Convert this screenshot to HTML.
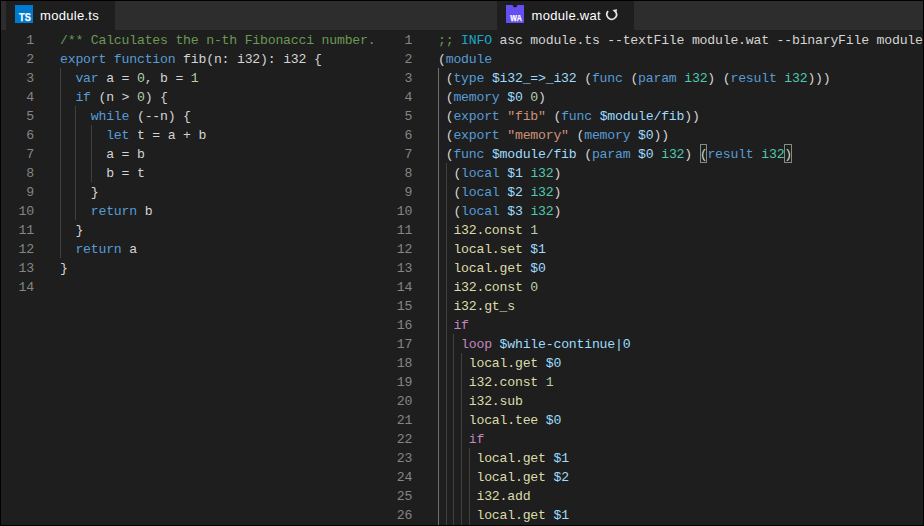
<!DOCTYPE html>
<html lang="en"><head><meta charset="utf-8"><title>module.ts - module.wat</title>
<style>
html,body{margin:0;padding:0;background:#000;}
body{width:924px;height:526px;overflow:hidden;position:relative;font-family:"Liberation Sans",sans-serif;}
#win{position:absolute;left:1px;top:1px;width:922px;height:524px;background:#1e1e1e;overflow:hidden;}
#tabs{position:absolute;left:0;top:0;width:922px;height:29px;background:#2d2d2d;}
#strip{display:none}
.tab{position:absolute;top:0;height:29px;letter-spacing:0.3px;background:#1e1e1e;color:#fff;font-size:13px;line-height:30px;white-space:nowrap;}
.tab .ic{position:absolute;top:4px;width:18px;height:18px;}
.tab .lb{position:absolute;top:0;}
.pane{position:absolute;top:30px;height:494px;overflow:hidden;}
.code{position:absolute;left:0;top:0;font-family:"Liberation Mono",monospace;font-size:13.2px;letter-spacing:-0.2200px;line-height:19px;color:#d4d4d4;white-space:pre;}
.ln{height:19px;position:relative;}
.no{position:absolute;left:0;top:0;text-align:right;color:#858585;}
.tx{position:absolute;top:0;}
.k{color:#569cd6}.c{color:#6a9955}.n{color:#b5cea8}.w{color:#d4d4d4}
.v{color:#9cdcfe}.t{color:#4ec9b0}.s{color:#ce9178}.f{color:#dcdcaa}.p{color:#c586c0}.i{color:#1aa7c9}
.g{position:absolute;width:1px;background:#404040;display:block}
.ga{background:#707070}
.bm{position:absolute;display:block;box-sizing:border-box;width:7.7px;height:19px;border:1px solid #888;background:rgba(0,100,0,0.1);}
#L .no{width:32.9px}#L .tx{left:59px}
#R .no{width:411.1px}#R .tx{left:437px}
</style></head><body>
<div id="win">
<div id="tabs"><div id="strip"></div>
<div class="tab" style="left:5px;width:109px"><svg class="ic" style="left:9px" viewBox="0 0 18 18"><rect width="18" height="18" fill="#007acc"/><text x="3.9" y="15.9" textLength="12.3" lengthAdjust="spacingAndGlyphs" font-family="Liberation Sans, sans-serif" font-weight="bold" font-size="11" fill="#fff" stroke="#fff" stroke-width="0.25">TS</text></svg><span class="lb" style="left:34px">module.ts</span></div>
<div class="tab" style="left:496px;width:137px"><svg class="ic" style="left:9px" viewBox="0 0 18 18"><path d="M0 0H6.6A2.4 2.4 0 0 0 11.4 0H18V18H0Z" fill="#654ff0"/><text x="4.2" y="15.6" textLength="11.9" lengthAdjust="spacingAndGlyphs" font-family="Liberation Sans, sans-serif" font-weight="bold" font-size="8.6" fill="#fff" stroke="#fff" stroke-width="0.25">WA</text></svg><span class="lb" style="left:34.5px">module.wat</span><svg style="position:absolute;left:104px;top:3px;width:20px;height:20px" viewBox="601 4 20 20"><path d="M608.13 11.19A4.8 4.8 0 1 0 615.94 12.15" fill="none" stroke="#e4e4e4" stroke-width="1.7"/><path d="M612.5 10.0L617.1 9.3L616.2 13.7Z" fill="#e4e4e4"/></svg></div>
</div>
<div class="pane" id="L" style="left:0;width:379px"><i class="g" style="left:59.00px;top:37px;height:190px"></i><i class="g" style="left:74.40px;top:75px;height:114px"></i><i class="g" style="left:89.80px;top:94px;height:57px"></i><div class="code"><div class="ln"><span class="no">1</span><span class="tx"><span class="c">/** Calculates the n-th Fibonacci number. */</span></span></div><div class="ln"><span class="no">2</span><span class="tx"><span class="k">export function</span><span class="w"> fib(n: i32): i32 {</span></span></div><div class="ln"><span class="no">3</span><span class="tx"><span class="w">  </span><span class="k">var</span><span class="w"> a = </span><span class="n">0</span><span class="w">, b = </span><span class="n">1</span></span></div><div class="ln"><span class="no">4</span><span class="tx"><span class="w">  </span><span class="k">if</span><span class="w"> (n &gt; </span><span class="n">0</span><span class="w">) {</span></span></div><div class="ln"><span class="no">5</span><span class="tx"><span class="w">    </span><span class="k">while</span><span class="w"> (--n) {</span></span></div><div class="ln"><span class="no">6</span><span class="tx"><span class="w">      </span><span class="k">let</span><span class="w"> t = a + b</span></span></div><div class="ln"><span class="no">7</span><span class="tx"><span class="w">      a = b</span></span></div><div class="ln"><span class="no">8</span><span class="tx"><span class="w">      b = t</span></span></div><div class="ln"><span class="no">9</span><span class="tx"><span class="w">    }</span></span></div><div class="ln"><span class="no">10</span><span class="tx"><span class="w">    </span><span class="k">return</span><span class="w"> b</span></span></div><div class="ln"><span class="no">11</span><span class="tx"><span class="w">  }</span></span></div><div class="ln"><span class="no">12</span><span class="tx"><span class="w">  </span><span class="k">return</span><span class="w"> a</span></span></div><div class="ln"><span class="no">13</span><span class="tx"><span class="w">}</span></span></div><div class="ln"><span class="no">14</span><span class="tx"></span></div></div></div>
<div class="pane" id="R" style="left:0;width:922px;clip-path:inset(0 0 0 379px)"><i class="g ga" style="left:437.00px;top:37px;height:475px"></i><i class="g" style="left:444.70px;top:132px;height:380px"></i><i class="g" style="left:452.40px;top:303px;height:209px"></i><i class="g" style="left:460.10px;top:322px;height:190px"></i><i class="g" style="left:467.80px;top:417px;height:95px"></i><i class="bm" style="left:699px;top:113px;width:7px"></i><i class="bm" style="left:783px;top:113px;width:8px"></i><div class="code"><div class="ln"><span class="no">1</span><span class="tx"><span class="c">;;</span><span class="w"> </span><span class="i">INFO</span><span class="w"> asc module.ts --textFile module.wat --binaryFile module.wasm</span></span></div><div class="ln"><span class="no">2</span><span class="tx"><span class="w">(</span><span class="k">module</span></span></div><div class="ln"><span class="no">3</span><span class="tx"><span class="w"> (</span><span class="k">type</span><span class="w"> </span><span class="v">$i32_=&gt;_i32</span><span class="w"> (</span><span class="k">func</span><span class="w"> (</span><span class="k">param</span><span class="w"> </span><span class="t">i32</span><span class="w">) (</span><span class="k">result</span><span class="w"> </span><span class="t">i32</span><span class="w">)))</span></span></div><div class="ln"><span class="no">4</span><span class="tx"><span class="w"> (</span><span class="k">memory</span><span class="w"> </span><span class="v">$0</span><span class="w"> </span><span class="n">0</span><span class="w">)</span></span></div><div class="ln"><span class="no">5</span><span class="tx"><span class="w"> (</span><span class="k">export</span><span class="w"> </span><span class="s">"fib"</span><span class="w"> (</span><span class="k">func</span><span class="w"> </span><span class="v">$module/fib</span><span class="w">))</span></span></div><div class="ln"><span class="no">6</span><span class="tx"><span class="w"> (</span><span class="k">export</span><span class="w"> </span><span class="s">"memory"</span><span class="w"> (</span><span class="k">memory</span><span class="w"> </span><span class="v">$0</span><span class="w">))</span></span></div><div class="ln"><span class="no">7</span><span class="tx"><span class="w"> (</span><span class="k">func</span><span class="w"> </span><span class="v">$module/fib</span><span class="w"> (</span><span class="k">param</span><span class="w"> </span><span class="v">$0</span><span class="w"> </span><span class="t">i32</span><span class="w">) </span><span class="w">(</span><span class="k">result</span><span class="w"> </span><span class="t">i32</span><span class="w">)</span></span></div><div class="ln"><span class="no">8</span><span class="tx"><span class="w">  (</span><span class="k">local</span><span class="w"> </span><span class="v">$1</span><span class="w"> </span><span class="t">i32</span><span class="w">)</span></span></div><div class="ln"><span class="no">9</span><span class="tx"><span class="w">  (</span><span class="k">local</span><span class="w"> </span><span class="v">$2</span><span class="w"> </span><span class="t">i32</span><span class="w">)</span></span></div><div class="ln"><span class="no">10</span><span class="tx"><span class="w">  (</span><span class="k">local</span><span class="w"> </span><span class="v">$3</span><span class="w"> </span><span class="t">i32</span><span class="w">)</span></span></div><div class="ln"><span class="no">11</span><span class="tx"><span class="w">  </span><span class="f">i32.const</span><span class="w"> </span><span class="n">1</span></span></div><div class="ln"><span class="no">12</span><span class="tx"><span class="w">  </span><span class="f">local.set</span><span class="w"> </span><span class="v">$1</span></span></div><div class="ln"><span class="no">13</span><span class="tx"><span class="w">  </span><span class="f">local.get</span><span class="w"> </span><span class="v">$0</span></span></div><div class="ln"><span class="no">14</span><span class="tx"><span class="w">  </span><span class="f">i32.const</span><span class="w"> </span><span class="n">0</span></span></div><div class="ln"><span class="no">15</span><span class="tx"><span class="w">  </span><span class="f">i32.gt_s</span></span></div><div class="ln"><span class="no">16</span><span class="tx"><span class="w">  </span><span class="p">if</span></span></div><div class="ln"><span class="no">17</span><span class="tx"><span class="w">   </span><span class="p">loop</span><span class="w"> </span><span class="v">$while-continue|0</span></span></div><div class="ln"><span class="no">18</span><span class="tx"><span class="w">    </span><span class="f">local.get</span><span class="w"> </span><span class="v">$0</span></span></div><div class="ln"><span class="no">19</span><span class="tx"><span class="w">    </span><span class="f">i32.const</span><span class="w"> </span><span class="n">1</span></span></div><div class="ln"><span class="no">20</span><span class="tx"><span class="w">    </span><span class="f">i32.sub</span></span></div><div class="ln"><span class="no">21</span><span class="tx"><span class="w">    </span><span class="f">local.tee</span><span class="w"> </span><span class="v">$0</span></span></div><div class="ln"><span class="no">22</span><span class="tx"><span class="w">    </span><span class="p">if</span></span></div><div class="ln"><span class="no">23</span><span class="tx"><span class="w">     </span><span class="f">local.get</span><span class="w"> </span><span class="v">$1</span></span></div><div class="ln"><span class="no">24</span><span class="tx"><span class="w">     </span><span class="f">local.get</span><span class="w"> </span><span class="v">$2</span></span></div><div class="ln"><span class="no">25</span><span class="tx"><span class="w">     </span><span class="f">i32.add</span></span></div><div class="ln"><span class="no">26</span><span class="tx"><span class="w">     </span><span class="f">local.get</span><span class="w"> </span><span class="v">$1</span></span></div><div class="ln"><span class="no">27</span><span class="tx"><span class="w">     </span><span class="f">local.set</span><span class="w"> </span><span class="v">$3</span></span></div></div></div>
</div>
</body></html>
